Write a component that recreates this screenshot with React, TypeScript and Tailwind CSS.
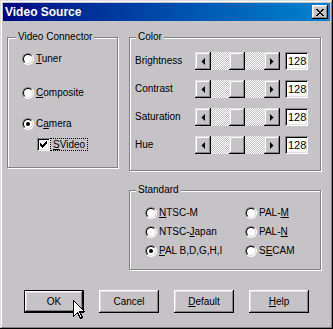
import React from 'react';

const raised =
  'shadow-[inset_-1px_-1px_#000,inset_1px_1px_#fff,inset_-2px_-2px_#848284,inset_2px_2px_#dedfde]';
const scrollRaised =
  'shadow-[inset_-1px_-1px_#000,inset_1px_1px_#dedfde,inset_-2px_-2px_#848284,inset_2px_2px_#fff]';
const sunken =
  'shadow-[inset_1px_1px_#848284,inset_-1px_-1px_#fff,inset_2px_2px_#000,inset_-2px_-2px_#dedfde]';

const Radio: React.FC<{ checked?: boolean }> = ({ checked }) => (
  <span className="relative inline-block w-[12px] h-[12px] shrink-0 rounded-full border border-t-[#848284] border-l-[#848284] border-b-white border-r-white">
    <span className="absolute inset-0 rounded-full border border-t-black border-l-black border-b-[#dedfde] border-r-[#dedfde] bg-white flex items-center justify-center">
      {checked && <span className="w-[4px] h-[4px] rounded-full bg-black" />}
    </span>
  </span>
);

const RadioRow: React.FC<{ checked?: boolean; className?: string; children: React.ReactNode }> = ({
  checked,
  className = '',
  children,
}) => (
  <div className={`flex items-center h-[12px] ${className}`}>
    <Radio checked={checked} />
    <span className="ml-[2px] leading-[12px] whitespace-nowrap">{children}</span>
  </div>
);

const GroupBox: React.FC<{
  label: string;
  labelLeft: string;
  className?: string;
  children: React.ReactNode;
}> = ({ label, labelLeft, className = '', children }) => (
  <div
    className={`relative shrink-0 border border-[#848284] shadow-[inset_1px_1px_#fff,1px_1px_#fff] ${className}`}
  >
    <span className={`absolute -top-[7px] ${labelLeft} px-[2px] bg-[#c6c3c6] leading-[12px] whitespace-nowrap`}>
      {label}
    </span>
    {children}
  </div>
);

const Arrow: React.FC<{ dir: 'left' | 'right' }> = ({ dir }) => (
  <svg width="4" height="7" viewBox="0 0 4 7">
    {dir === 'left' ? <path d="M4 0V7L0.5 3.5Z" fill="black" /> : <path d="M0 0V7L3.5 3.5Z" fill="black" />}
  </svg>
);

const ScrollBar = () => (
  <div className="flex w-[85px] h-[18px] shrink-0">
    <div className={`w-[16px] h-full bg-[#c6c3c6] flex items-center justify-center ${scrollRaised}`}>
      <Arrow dir="left" />
    </div>
    <div className="flex-1 h-full pl-[18px] bg-[image:repeating-conic-gradient(#fff_0%_25%,#c6c3c6_0%_50%)] bg-[length:2px_2px]">
      <div className={`w-[16px] h-full bg-[#c6c3c6] ${scrollRaised}`} />
    </div>
    <div className={`w-[16px] h-full bg-[#c6c3c6] flex items-center justify-center ${scrollRaised}`}>
      <Arrow dir="right" />
    </div>
  </div>
);

const CheckMark = () => (
  <svg width="7" height="7" viewBox="0 0 7 7" shapeRendering="crispEdges">
    <rect x="6" y="0" width="1" height="1" />
    <rect x="5" y="1" width="2" height="1" />
    <rect x="0" y="2" width="1" height="1" />
    <rect x="4" y="2" width="3" height="1" />
    <rect x="0" y="3" width="2" height="1" />
    <rect x="3" y="3" width="3" height="1" />
    <rect x="0" y="4" width="5" height="1" />
    <rect x="1" y="5" width="3" height="1" />
    <rect x="2" y="6" width="1" height="1" />
  </svg>
);

const colorRows = ['Brightness', 'Contrast', 'Saturation', 'Hue'];

export default function App() {
  return (
    <div className="w-[333px] h-[329px] bg-[#c6c3c6] p-[3px] text-black text-[10px] font-['Liberation_Sans',Arial,sans-serif] shadow-[inset_-1px_-1px_#000,inset_1px_1px_#dedfde,inset_-2px_-2px_#848284,inset_2px_2px_#fff] select-none">
      {/* title bar */}
      <div className="h-[18px] flex items-center justify-between bg-gradient-to-r from-[#000084] to-[#1084d0] pl-[2px] pr-[2px]">
        <span className="text-white font-bold text-[12px] leading-[18px]">Video Source</span>
        <div className={`w-[16px] h-[14px] bg-[#c6c3c6] flex items-center justify-center ${raised}`}>
          <svg width="8" height="7" viewBox="0 0 8 7" shapeRendering="crispEdges">
            <path
              d="M0 0h2v1h1v1h2V1h1V0h2v1H7v1H6v1H5v1h1v1h1v1h1v1H6V6H5V5H3v1H2v1H0V6h1V5h1V4h1V3H2V2H1V1H0z"
              fill="black"
            />
          </svg>
        </div>
      </div>

      {/* group boxes */}
      <div className="flex pl-[4px] pt-[16px]">
        <GroupBox label="Video Connector" labelLeft="left-[8px]" className="w-[111px] h-[131px]">
          <div className="pl-[14px] pt-[15px] flex flex-col">
            <RadioRow>
              <u>T</u>uner
            </RadioRow>
            <RadioRow className="mt-[22px]">
              <u>C</u>omposite
            </RadioRow>
            <RadioRow checked className="mt-[19px]">
              C<u>a</u>mera
            </RadioRow>
            <div className="mt-[8px] ml-[15px] flex items-center h-[13px]">
              <span className={`w-[13px] h-[13px] shrink-0 bg-white flex items-center justify-center ${sunken}`}>
                <CheckMark />
              </span>
              <span className="h-[13px] border border-dotted border-black px-[2px] leading-[11px]">
                <u>S</u>Video
              </span>
            </div>
          </div>
        </GroupBox>

        <div className="ml-[11px] flex flex-col">
          <GroupBox label="Color" labelLeft="left-[6px]" className="w-[192px] h-[134px]">
            <div className="pl-[5px] pt-[14px] flex flex-col gap-[10px]">
              {colorRows.map((name) => (
                <div key={name} className="flex items-center h-[18px]">
                  <span className="w-[60px] leading-[12px]">{name}</span>
                  <ScrollBar />
                  <span
                    className={`ml-[5px] w-[23px] h-[18px] bg-white pl-[3px] text-[11px] leading-[18px] ${sunken}`}
                  >
                    128
                  </span>
                </div>
              ))}
            </div>
          </GroupBox>

          <GroupBox label="Standard" labelLeft="left-[6px]" className="mt-[19px] w-[192px] h-[80px]">
            <div className="pl-[15px] pt-[16px] grid grid-cols-[100px_auto] gap-y-[7px]">
              <RadioRow>
                <u>N</u>TSC-M
              </RadioRow>
              <RadioRow>
                PAL-<u>M</u>
              </RadioRow>
              <RadioRow>
                NTSC-<u>J</u>apan
              </RadioRow>
              <RadioRow>
                PAL-<u>N</u>
              </RadioRow>
              <RadioRow checked>
                <u>P</u>AL B,D,G,H,I
              </RadioRow>
              <RadioRow>
                S<u>E</u>CAM
              </RadioRow>
            </div>
          </GroupBox>
        </div>
      </div>

      {/* buttons */}
      <div className="mt-[20px] pl-[21px] flex gap-[15px]">
        <div className="relative w-[60px] h-[23px] border border-black">
          <div className={`w-full h-full flex items-center justify-center bg-[#c6c3c6] ${raised}`}>OK</div>
          <svg
            width="12"
            height="19"
            viewBox="0 0 12 19"
            className="absolute left-[48px] top-[9px]"
            shapeRendering="crispEdges"
          >
            <path
              d="M0.5 0.5V16.5L4.5 12.5L7.5 18.5L9.5 17.5L6.5 11.5H11.5Z"
              fill="white"
              stroke="black"
              strokeLinejoin="miter"
            />
          </svg>
        </div>
        <div className={`w-[60px] h-[23px] flex items-center justify-center bg-[#c6c3c6] ${raised}`}>Cancel</div>
        <div className={`w-[60px] h-[23px] flex items-center justify-center bg-[#c6c3c6] ${raised}`}>
          <span>
            <u>D</u>efault
          </span>
        </div>
        <div className={`w-[60px] h-[23px] flex items-center justify-center bg-[#c6c3c6] ${raised}`}>
          <span>
            <u>H</u>elp
          </span>
        </div>
      </div>
    </div>
  );
}
